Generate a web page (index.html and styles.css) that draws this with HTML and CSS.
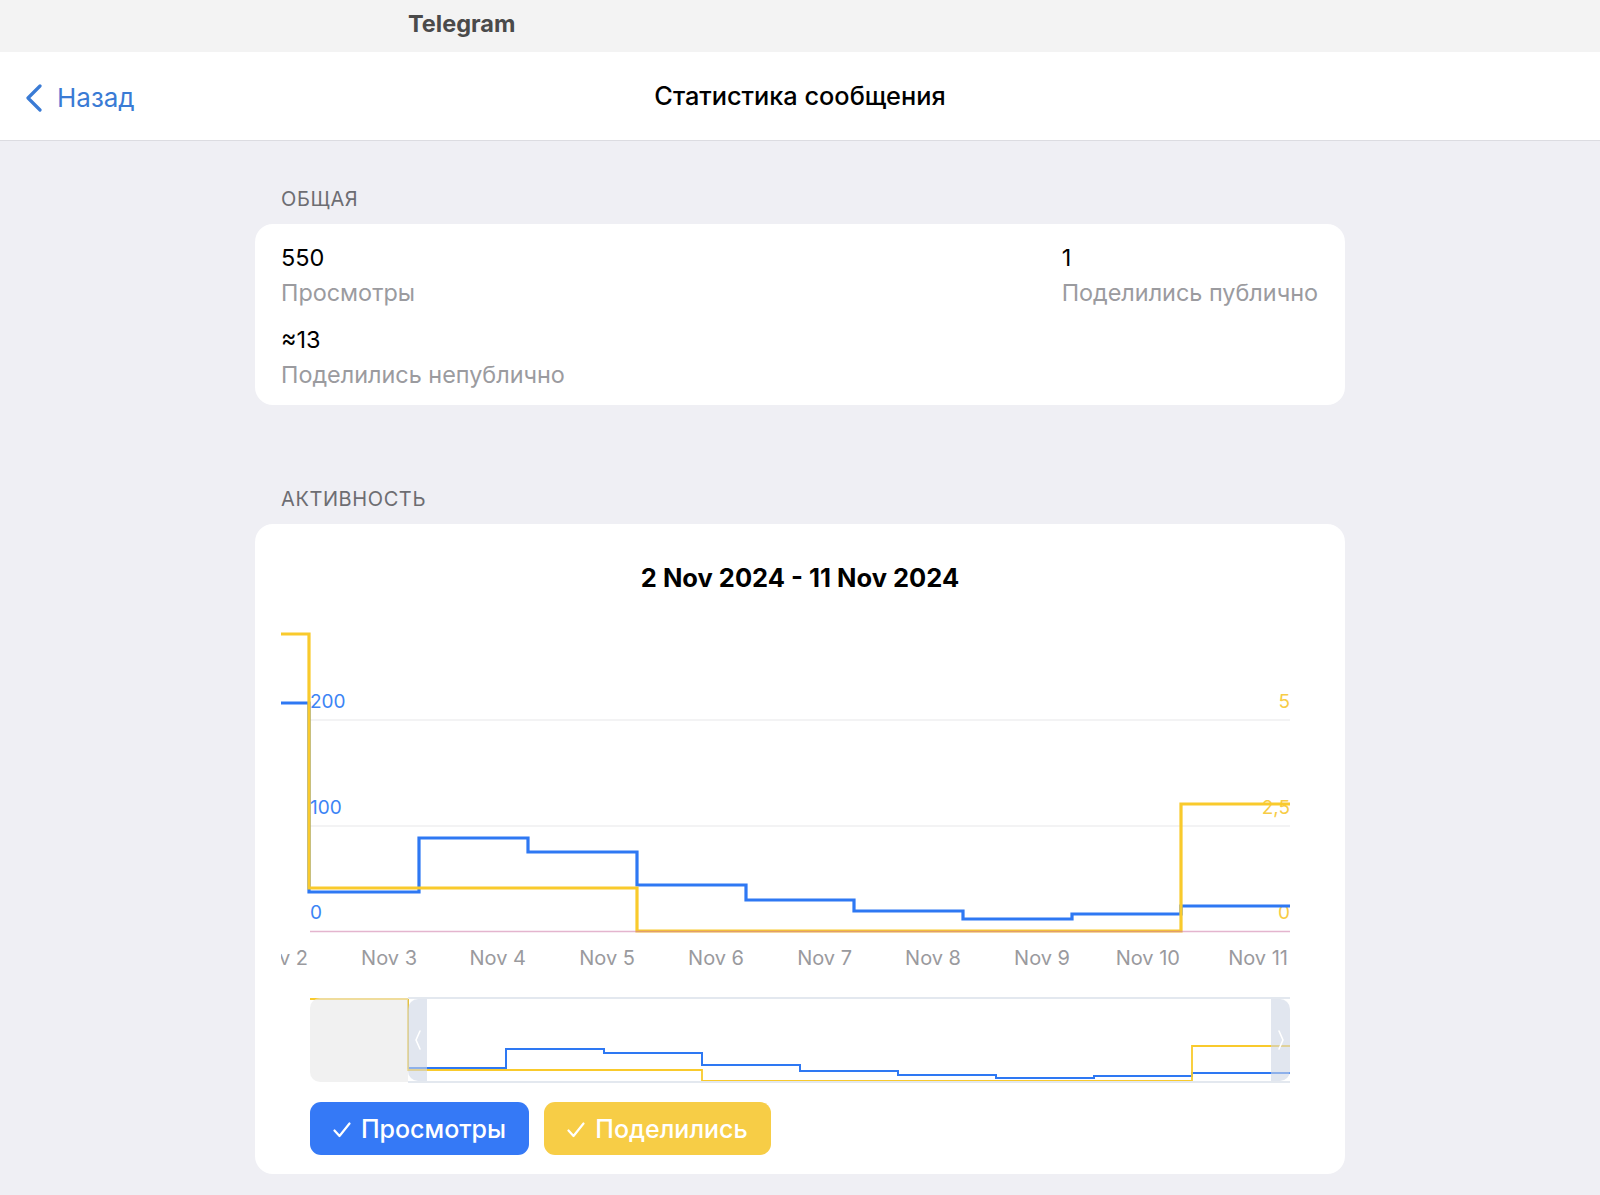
FILE: index.html
```html
<!DOCTYPE html>
<html lang="ru">
<head>
<meta charset="utf-8">
<title>Статистика сообщения</title>
<link rel="stylesheet" href="styles.css">
</head>
<body>
<div class="titlebar"><span class="app-name">Telegram</span></div>
<header class="navbar">
  <a class="back" href="#">
    <svg class="back-icon" width="18" height="28" viewBox="0 0 18 28"><polyline points="15,2 3,14 15,26" fill="none" stroke="#3a7bd5" stroke-width="3.2" stroke-linecap="round" stroke-linejoin="round"/></svg>
    <span>Назад</span>
  </a>
  <h1 class="nav-title">Статистика сообщения</h1>
  <div></div>
</header>
<main class="content">
  <h2 class="section-title">Общая</h2>
  <section class="card stats">
    <div class="stats-row">
      <div class="stat"><div class="stat-value">550</div><div class="stat-label">Просмотры</div></div>
      <div class="stat"><div class="stat-value">1</div><div class="stat-label">Поделились публично</div></div>
    </div>
    <div class="stats-row">
      <div class="stat"><div class="stat-value">≈13</div><div class="stat-label">Поделились непублично</div></div>
    </div>
  </section>

  <h2 class="section-title section-gap">Активность</h2>
  <section class="card chart-card">
    <div class="chart-title">2 Nov 2024 - 11 Nov 2024</div>
    <svg class="chart" width="1090" height="375" viewBox="255 600 1090 375">
      <defs><clipPath id="plotclip"><rect x="281" y="600" width="1010" height="375"/></clipPath></defs>
      <g clip-path="url(#plotclip)">
        <line x1="310" y1="720" x2="1290" y2="720" class="grid"/>
        <line x1="310" y1="826" x2="1290" y2="826" class="grid"/>
        <text x="310" y="708" class="lab-blue">200</text>
        <text x="310" y="814" class="lab-blue">100</text>
        <text x="310" y="919" class="lab-blue">0</text>
        <text x="1290" y="708" class="lab-yellow" text-anchor="end">5</text>
        <text x="1290" y="814" class="lab-yellow" text-anchor="end">2,5</text>
        <text x="1290" y="919" class="lab-yellow" text-anchor="end">0</text>
        <path class="line-blue" d="M281,703 H309 V892 H419 V838 H528 V852 H637 V885 H746 V900 H854 V911 H963 V919 H1072 V914 H1181 V906 H1290"/>
        <path class="line-yellow" d="M281,634 H309 V888 H637 V931 H1181 V804 H1290"/>
        <line x1="310" y1="931.5" x2="1290" y2="931.5" class="baseline"/>
        <g class="xlab" text-anchor="end">
          <text x="308" y="965">Nov 2</text>
          <text x="417" y="965">Nov 3</text>
          <text x="526" y="965">Nov 4</text>
          <text x="635" y="965">Nov 5</text>
          <text x="744" y="965">Nov 6</text>
          <text x="852" y="965">Nov 7</text>
          <text x="961" y="965">Nov 8</text>
          <text x="1070" y="965">Nov 9</text>
          <text x="1180" y="965">Nov 10</text>
          <text x="1288" y="965">Nov 11</text>
        </g>
      </g>
    </svg>

    <div class="minimap">
      <svg class="mini-lines" width="980" height="85" viewBox="310 995 980 85">
        <path class="mini-blue" d="M310,997 H408 V1066 H506 V1047 H604 V1051 H702 V1063 H800 V1069 H898 V1073 H996 V1076 H1094 V1074 H1192 V1071 H1290"/>
        <path class="mini-yellow" d="M310,997 H408 V1068 H702 V1079 H1192 V1044 H1290"/>
      </svg>
      <div class="mini-dim"></div>
      <div class="mini-window">
        <div class="handle handle-left"><svg width="8" height="22" viewBox="0 0 8 22"><polyline points="6,2 2,11 6,20" fill="none" stroke="#fff" stroke-width="1.6" stroke-linecap="round" stroke-linejoin="round"/></svg></div>
        <div class="mini-gap"></div>
        <div class="handle handle-right"><svg width="8" height="22" viewBox="0 0 8 22"><polyline points="2,2 6,11 2,20" fill="none" stroke="#fff" stroke-width="1.6" stroke-linecap="round" stroke-linejoin="round"/></svg></div>
      </div>
    </div>

    <div class="legend">
      <button class="chip chip-blue"><svg class="check" width="18" height="16" viewBox="0 0 18 16"><polyline points="1.5,8.5 6.5,14 16.5,1.5" fill="none" stroke="#fff" stroke-width="2.2" stroke-linecap="round" stroke-linejoin="round"/></svg><span>Просмотры</span></button>
      <button class="chip chip-yellow"><svg class="check" width="18" height="16" viewBox="0 0 18 16"><polyline points="1.5,8.5 6.5,14 16.5,1.5" fill="none" stroke="#fff" stroke-width="2.2" stroke-linecap="round" stroke-linejoin="round"/></svg><span>Поделились</span></button>
    </div>
  </section>
</main>
</body>
</html>
```

FILE: styles.css
```css
* { box-sizing: border-box; }

html, body {
  margin: 0;
  padding: 0;
}

body {
  background: #efeff4;
  font-family: Inter, "Noto Sans", sans-serif;
  color: #000;
  min-height: 1195px;
}

.titlebar {
  height: 52px;
  background: #f3f3f3;
  padding-left: 408px;
  padding-bottom: 5px;
  display: flex;
  align-items: center;
}

.app-name {
  font-size: 23.5px;
  font-weight: 700;
  color: #4a4a4a;
}

.navbar {
  height: 89px;
  background: #fff;
  border-bottom: 1px solid #dcdce1;
  display: grid;
  grid-template-columns: 1fr auto 1fr;
  align-items: center;
}

.back {
  display: flex;
  align-items: center;
  gap: 14px;
  padding-left: 25px;
  padding-top: 3px;
  color: #3a7bd5;
  text-decoration: none;
  font-size: 26px;
}

.back-icon { display: block; }

.nav-title {
  margin: 0 0 2px;
  font-size: 25.3px;
  font-weight: 500;
  color: #000;
}

.content {
  width: 1090px;
  margin: 0 auto;
  padding-top: 46px;
}

.section-title {
  margin: 0;
  padding-left: 26px;
  font-size: 20px;
  line-height: 24px;
  font-weight: 400;
  letter-spacing: 0.6px;
  text-transform: uppercase;
  color: #6d6d72;
}

.section-gap { margin-top: 82px; }

.card {
  margin-top: 13px;
  background: #fff;
  border-radius: 18px;
}

.stats {
  padding: 18px 27px 11px 26px;
  display: flex;
  flex-direction: column;
  gap: 12px;
}

.stats-row {
  display: flex;
  justify-content: space-between;
}

.stat-value {
  font-size: 23.5px;
  line-height: 32px;
}

.stat-label {
  font-size: 23.4px;
  line-height: 38px;
  color: #9b9b9f;
}

.chart-card {
  padding-top: 34px;
  padding-bottom: 19px;
}

.chart-title {
  text-align: center;
  font-size: 25.5px;
  line-height: 40px;
  font-weight: 700;
  margin-bottom: 2px;
}

.chart {
  display: block;
}

.grid {
  stroke: #efeff1;
  stroke-width: 1.6;
}

.baseline {
  stroke: rgba(205, 120, 165, 0.55);
  stroke-width: 1.6;
}

.lab-blue {
  font-size: 19px;
  fill: #3d84f5;
}

.lab-yellow {
  font-size: 19px;
  fill: #f7cc45;
}

.xlab text {
  font-size: 20px;
  fill: #9a9a9e;
}

.line-blue {
  fill: none;
  stroke: #2e78f3;
  stroke-width: 3.2;
}

.line-yellow {
  fill: none;
  stroke: #f9ca2c;
  stroke-width: 3.2;
}

.minimap {
  position: relative;
  margin: 22px 55px 0;
  height: 85px;
  display: flex;
}

.mini-lines {
  position: absolute;
  left: 0;
  top: 0;
  display: block;
}

.mini-blue {
  fill: none;
  stroke: #2e78f3;
  stroke-width: 2;
}

.mini-yellow {
  fill: none;
  stroke: #f9ca2c;
  stroke-width: 1.8;
}

.mini-dim {
  position: relative;
  width: 98px;
  margin-top: 1px;
  background: rgba(232, 232, 232, 0.6);
  border-radius: 10px 0 0 10px;
}

.mini-window {
  position: relative;
  flex: 1;
  display: flex;
  border-top: 2px solid #e3e8ef;
  border-bottom: 2px solid #e3e8ef;
  margin-bottom: -1px;
}

.handle {
  width: 19px;
  background: rgba(205, 214, 228, 0.6);
  display: flex;
  align-items: center;
  justify-content: center;
}

.handle-left { border-radius: 10px 0 0 10px; }
.handle-right { border-radius: 0 10px 10px 0; }

.mini-gap { flex: 1; }

.legend {
  margin-top: 20px;
  padding-left: 55px;
  display: flex;
  gap: 15px;
}

.chip {
  height: 53px;
  border: none;
  border-radius: 11px;
  color: #fff;
  font-family: Inter, "Noto Sans", sans-serif;
  font-size: 25px;
  font-weight: 500;
  padding: 0;
  display: flex;
  align-items: center;
  justify-content: center;
  gap: 10px;
}

.check { display: block; margin-top: 2px; }

.chip-blue {
  width: 219px;
  background: #3579f6;
}

.chip-yellow {
  width: 227px;
  background: #f7cd46;
}
```
